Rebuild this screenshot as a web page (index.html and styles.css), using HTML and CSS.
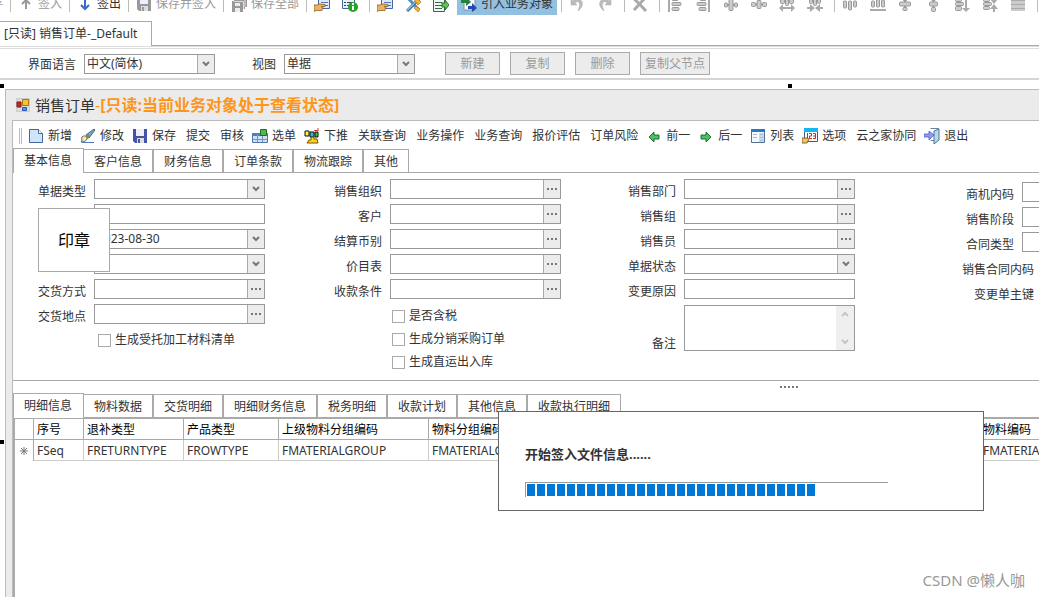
FILE: index.html
```html
<!DOCTYPE html>
<html lang="zh-CN">
<head>
<meta charset="utf-8">
<title>销售订单</title>
<link rel="stylesheet" href="styles.css">
</head>
<body>
<svg class="defs" aria-hidden="true">
  <symbol id="floppy" viewBox="0 0 16 16"><path d="M1 1h14v14H3l-2-2z" fill="currentColor"/><path d="M4 1h8v7H4z" fill="#eef"/><path d="M5 10h7v5H5z" fill="#ddd"/><path d="M6 11h2v4H6z" fill="currentColor"/></symbol>
  <symbol id="floppies" viewBox="0 0 16 16"><path d="M5 0h11v11h-2v2h-2v3H1V5h2V3h2z" fill="#999"/><path d="M3 5.500h9.500V13M5 3.500h9V11" stroke="#ddd" fill="none"/><path d="M4 7h5v3H4zM4 12h5v4H4z" fill="#eee"/></symbol>
  <symbol id="form-hand" viewBox="0 0 16 16"><path d="M4.500.500h11v12h-11z" fill="#dce8fb" stroke="#4568a0"/><path d="M1 1h3v3H1z" fill="#234"/><path d="M7 3.500h7M7 6.500h7M9 9.500h5" stroke="#5777a8"/><path d="M0 9h3l2-1 6 .5v2H7l2 1-1 3H2l-2 1z" fill="#e9b45c" stroke="#83531c" stroke-width=".7"/></symbol>
  <symbol id="form-info" viewBox="0 0 16 16"><path d="M.500.500h12v12H.500z" fill="#e8effa" stroke="#4568a0"/><path d="M2 3.500h2m1 0h6M2 6.500h2m1 0h6M2 9.500h2m1 0h3" stroke="#345"/><circle cx="11" cy="11" r="5" fill="#28a12c"/><path d="M11 7v2m0 1v4" stroke="#fff" stroke-width="2"/></symbol>
  <symbol id="tools" viewBox="0 0 16 16"><path d="M2 1l12 13" stroke="#4e93cb" stroke-width="3"/><path d="M14 3L2 15" stroke="#3b6b9a" stroke-width="3"/><path d="M13.500 3L2 14.500" stroke="#dff" stroke-width="1"/><path d="M8 1l4 1 4 4-3 3-3-4zM11 10l4 3-2 3-4-4z" fill="#f3b52f" stroke="#9c671b" stroke-width=".6"/></symbol>
  <symbol id="doc-go" viewBox="0 0 16 16"><path d="M.500.500h11v15H.500z" fill="#eff6ef" stroke="#346a4c"/><path d="M2 3.500h7M2 6.500h7M2 9.500h7M2 12.500h7" stroke="#356b4c"/><path d="M9 7h3V4l4 5-4 5v-3H9z" fill="#68bf58" stroke="#26742c"/></symbol>
  <symbol id="import" viewBox="0 0 16 16"><path d="M3 0h11v14H3z" fill="#f5f8fc" stroke="#7f95ad"/><path d="M0 4h5V1l5 5-5 4V7H0z" fill="#218238"/><path d="M7 10h4V7l5 5-5 4v-3H7z" fill="#2447b3"/></symbol>
  <symbol id="undo" viewBox="0 0 16 16"><path d="M2 3v6h6L6 7c3-3 6 0 4 5l-1 3c6-4 6-12-1-12-2 0-3 1-4 2z" fill="#bbb" stroke="#aaa" stroke-width=".5"/></symbol>
  <symbol id="cross" viewBox="0 0 16 16"><path d="M1 2c4 3 8 8 13 13M14 1C10 5 6 10 2 14" stroke="#aaa" stroke-width="3" fill="none"/></symbol>
  <symbol id="al-edge" viewBox="0 0 16 16"><path d="M2 0v16" stroke="#aaa" stroke-width="2"/><g fill="#ccc" stroke="#999"><rect x="5" y="1.500" width="6" height="3" rx="1"/><rect x="5" y="6.500" width="9" height="3" rx="1"/><rect x="5" y="11.500" width="7" height="3" rx="1"/></g></symbol>
  <symbol id="al-mid" viewBox="0 0 16 16"><g fill="#ccc" stroke="#999"><path d="M1 9h14" stroke-width="2"/><rect x="1.500" y="7" width="3" height="4" rx="1"/><rect x="6" y="3.500" width="4" height="11" rx="1"/><rect x="11.500" y="7" width="3" height="4" rx="1"/></g></symbol>
  <symbol id="al-space" viewBox="0 0 16 16"><g fill="#ccc" stroke="#999"><path d="M1 8.500h14" stroke-width="2"/><rect x=".500" y="6.500" width="4" height="4" rx="1"/><rect x="6" y="4.500" width="4" height="8" rx="1"/><rect x="11.500" y="6.500" width="4" height="4" rx="1"/></g></symbol>
  <symbol id="al-size" viewBox="0 0 16 16"><g fill="#ccc" stroke="#999"><rect x="1.500" y="1.500" width="4" height="6" rx="1"/><rect x="6.500" y="1.500" width="3" height="8" rx="1"/><rect x="10.500" y="1.500" width="4" height="6" rx="1"/></g><path d="M0 12l4-4v3h8V8l4 4-4 4v-3H4v3z" fill="#aaa"/></symbol>
  <symbol id="al-close" viewBox="0 0 16 16"><g fill="#ccc" stroke="#999"><rect x="2.500" y="1.500" width="3" height="6" rx="1"/><rect x="6.500" y="1.500" width="3" height="8" rx="1"/><rect x="10.500" y="1.500" width="3" height="6" rx="1"/></g><path d="M0 11h3V8l5 4-5 4v-3H0zM16 11h-3V8l-5 4 5 4v-3h3z" fill="#aaa"/></symbol>
  <symbol id="al-rows" viewBox="0 0 16 16"><path d="M1 0h14v15H1z" fill="#ccc"/><path d="M1 4.500h14M1 8.500h14M1 12.500h14" stroke="#aaa"/></symbol>
  <symbol id="arrow" viewBox="0 0 16 16"><path d="M3 9l5-5v3h5v4H8v3z" fill="#4fbf62" stroke="#177332" stroke-width="1"/></symbol>
</svg>

<div class="app-bar" role="toolbar">
  <button class="app-btn cut">存</button><i class="sep"></i>
  <button class="app-btn off"><svg class="ic" viewBox="0 0 16 16"><path d="M8 13V4M4 8l4-4 4 4" stroke="#999" stroke-width="2" fill="none"/></svg>签入</button><i class="sep"></i>
  <button class="app-btn"><svg class="ic" viewBox="0 0 16 16"><path d="M8 1v12M4 9l4 4 4-4" stroke="#3769d3" stroke-width="2" fill="none"/></svg>签出</button><i class="sep"></i>
  <button class="app-btn off"><svg class="ic"><use href="#floppy"/></svg>保存并签入</button><i class="sep"></i>
  <button class="app-btn off"><svg class="ic"><use href="#floppies"/></svg>保存全部</button><i class="sep"></i>
  <button class="tool" aria-label="表单"><svg class="ic"><use href="#form-hand"/></svg></button>
  <button class="tool" aria-label="信息"><svg class="ic"><use href="#form-info"/></svg></button><i class="sep"></i>
  <button class="tool" aria-label="属性"><svg class="ic"><use href="#form-hand"/></svg></button>
  <button class="tool" aria-label="工具"><svg class="ic"><use href="#tools"/></svg></button>
  <button class="tool" aria-label="导出"><svg class="ic"><use href="#doc-go"/></svg></button>
  <button class="app-btn on"><svg class="ic"><use href="#import"/></svg>引入业务对象</button><i class="sep"></i>
  <button class="tool" aria-label="撤销"><svg class="ic"><use href="#undo"/></svg></button>
  <button class="tool" aria-label="重做"><svg class="ic flip"><use href="#undo"/></svg></button><i class="sep"></i>
  <button class="tool" aria-label="删除对象"><svg class="ic"><use href="#cross"/></svg></button><i class="sep"></i>
  <button class="tool" aria-label="左对齐"><svg class="ic"><use href="#al-edge"/></svg></button>
  <button class="tool" aria-label="右对齐"><svg class="ic flip"><use href="#al-edge"/></svg></button>
  <button class="tool" aria-label="居中"><svg class="ic"><use href="#al-mid"/></svg></button>
  <button class="tool" aria-label="等间距"><svg class="ic"><use href="#al-space"/></svg></button>
  <button class="tool" aria-label="增加间距"><svg class="ic"><use href="#al-size"/></svg></button>
  <button class="tool" aria-label="减少间距"><svg class="ic"><use href="#al-close"/></svg></button><i class="sep"></i>
  <button class="tool" aria-label="顶对齐"><svg class="ic turn"><use href="#al-edge"/></svg></button>
  <button class="tool" aria-label="底对齐"><svg class="ic turn-back"><use href="#al-edge"/></svg></button>
  <button class="tool" aria-label="垂直居中"><svg class="ic turn"><use href="#al-mid"/></svg></button>
  <button class="tool" aria-label="垂直等间距"><svg class="ic turn"><use href="#al-space"/></svg></button>
  <button class="tool" aria-label="增加行距"><svg class="ic turn-back"><use href="#al-size"/></svg></button>
  <button class="tool" aria-label="减少行距"><svg class="ic turn-back"><use href="#al-close"/></svg></button>
  <button class="tool" aria-label="行"><svg class="ic"><use href="#al-rows"/></svg></button><i class="sep"></i>
</div>

<div class="doc-tabs"><button class="doc-tab">[只读] 销售订单-_Default</button></div>

<div class="filter-bar">
  <label for="lang">界面语言</label>
  <div class="field w-view"><select id="lang"><option>中文(简体)</option></select><span class="drop"><svg viewBox="0 0 8 6"><path d="M1 1l3 3 3-3" /></svg></span></div>
  <label for="view" class="view-label">视图</label>
  <div class="field w-view"><select id="view"><option>单据</option></select><span class="drop"><svg viewBox="0 0 8 6"><path d="M1 1l3 3 3-3" /></svg></span></div>
  <div class="actions"><button disabled>新建</button><button disabled>复制</button><button disabled>删除</button><button disabled class="wide">复制父节点</button></div>
</div>

<main class="canvas">
  <i class="handle h-nw"></i><i class="handle h-n"></i><i class="handle h-w"></i>
  <section class="window">
    <h1 class="title">
      <svg class="title-ic" viewBox="0 0 14 14"><path d="M.500.500h13v13H.500z" fill="#ddd" stroke="#ccc"/><path d="M1 4h4v5H1z" fill="#c82a22" stroke="#7a1512"/><path d="M6.500 1.500h6v6h-6z" fill="#f6c52d" stroke="#a87410"/><path d="M6.500 9.500h4v3h-4z" fill="#5b94ec" stroke="#2858ac"/></svg>
      <span>销售订单</span><span class="state">-<b>[只读:当前业务对象处于查看状态]</b></span>
    </h1>
    <div class="panel">
      <div class="tool-bar" role="toolbar">
        <i class="grip"></i>
        <button class="cmd"><svg class="ic" viewBox="0 0 16 16"><path d="M1.500 1.500h9l4 4v9h-13z" fill="#cfe5fa" stroke="#406795"/><path d="M10.500 1.500v4h4" fill="#fff" stroke="#406795"/></svg>新增</button>
        <button class="cmd"><svg class="ic" viewBox="0 0 16 16"><path d="M14 1l1 1-6 8-3-3z" fill="#7da7d4" stroke="#44608a"/><path d="M8 6l2 2-2 3-3-3z" fill="#5fa040"/><path d="M2 9c2-2 5-1 5 1 0 3-3 4-6 4 2-1 0-3 1-5z" fill="#f2e5bb" stroke="#6b6250"/><path d="M2 14.500h12" stroke="#4f79be" stroke-width="1"/></svg>修改</button>
        <button class="cmd"><svg class="ic blue"><use href="#floppy"/></svg>保存</button>
        <button class="cmd plain">提交</button>
        <button class="cmd plain">审核</button>
        <button class="cmd"><svg class="ic" viewBox="0 0 16 16"><path d="M.500 5.500h15v9H.500z" fill="#cfe0f6" stroke="#5275aa"/><path d="M0 5h9v3H0z" fill="#4e7dc1"/><path d="M.500 11.500h15M5.500 6v8M10.500 6v8" stroke="#7294c5"/><path d="M8.500 1.500h6v6h-6z" fill="#54b848" stroke="#236c24"/></svg>选单</button>
        <button class="cmd"><svg class="ic" viewBox="0 0 16 16"><path d="M1 3h4v5H1z" fill="#fff04a" stroke="#111"/><path d="M6 4h4v5H6z" fill="#26bfe8" stroke="#111"/><path d="M11 4h3v5h-3z" fill="#45c545" stroke="#111"/><path d="M10 2.500h4M14 0v3" stroke="#c43" /><path d="M7 9h3v2h3l1 4H3l2-3h2z" fill="#ffd21e" stroke="#735300"/></svg>下推</button>
        <button class="cmd plain">关联查询</button>
        <button class="cmd plain">业务操作</button>
        <button class="cmd plain">业务查询</button>
        <button class="cmd plain">报价评估</button>
        <button class="cmd plain">订单风险</button>
        <button class="cmd"><svg class="ic"><use href="#arrow"/></svg>前一</button>
        <button class="cmd"><svg class="ic flip"><use href="#arrow"/></svg>后一</button>
        <button class="cmd"><svg class="ic" viewBox="0 0 16 16"><path d="M1.500 1.500h13v13h-13z" fill="#f5f8fc" stroke="#526e95"/><path d="M1 1h14v3H1z" fill="#2478d0"/><path d="M9 5h5v9H9z" fill="#cbd9ec"/><path d="M3 6.500h4M3 9.500h4M10 6.500h3M10 9.500h3M10 12.500h3" stroke="#a9bcd4"/></svg>列表</button>
        <button class="cmd"><svg class="ic" viewBox="0 0 16 16"><path d="M2.500.500h13v13h-13z" fill="#fff" stroke="#425a82"/><path d="M2 0h14v4H2z" fill="#17b5ee"/><path d="M5.500 5v6M7 5.500h2.500V8H7.500v2.500H10M11 5.500h2.500v5H11M11 8h2" fill="none" stroke="#c22a30"/><path d="M0 10h5l2 1-2 4H0z" fill="#edc565" stroke="#8b642a"/></svg>选项</button>
        <button class="cmd plain">云之家协同</button>
        <button class="cmd"><svg class="ic" viewBox="0 0 16 16"><path d="M6.500.500h8v12h-8" fill="#fff" stroke="#6684a6"/><path d="M10 3l5-2v11l-5 4z" fill="#b9d8ee" stroke="#4e7394"/><path d="M0 6h5V3l5 4-5 5V9H0z" fill="#8f9df0" stroke="#4353b2" stroke-width=".7"/></svg>退出</button>
      </div>

      <nav class="tabs"><button class="tab current">基本信息</button><button class="tab">客户信息</button><button class="tab">财务信息</button><button class="tab">订单条款</button><button class="tab">物流跟踪</button><button class="tab">其他</button></nav>

      <form class="form">
        <div class="col col-1">
          <div class="row"><label for="a1">单据类型</label><div class="field"><select id="a1"><option></option></select><span class="drop"><svg viewBox="0 0 8 6"><path d="M1 1l3 3 3-3" /></svg></span></div></div>
          <div class="row"><label></label><div class="field"><input aria-label="单据编号"></div></div>
          <div class="row"><label></label><div class="field"><input aria-label="日期" value="2023-08-30"><button type="button" class="drop" aria-label="选择日期"><svg viewBox="0 0 8 6"><path d="M1 1l3 3 3-3" /></svg></button></div></div>
          <div class="row"><label></label><div class="field"><select aria-label="类型"><option></option></select><span class="drop"><svg viewBox="0 0 8 6"><path d="M1 1l3 3 3-3" /></svg></span></div></div>
          <div class="row"><label for="a5">交货方式</label><div class="field"><input id="a5"><button type="button" class="more" aria-label="选择"></button></div></div>
          <div class="row"><label for="a6">交货地点</label><div class="field"><input id="a6"><button type="button" class="more" aria-label="选择"></button></div></div>
          <label class="check"><input type="checkbox">生成受托加工材料清单</label>
          <div class="stamp">印章</div>
        </div>
        <div class="col col-2">
          <div class="row"><label for="b1">销售组织</label><div class="field"><input id="b1"><button type="button" class="more" aria-label="选择"></button></div></div>
          <div class="row"><label for="b2">客户</label><div class="field"><input id="b2"><button type="button" class="more" aria-label="选择"></button></div></div>
          <div class="row"><label for="b3">结算币别</label><div class="field"><input id="b3"><button type="button" class="more" aria-label="选择"></button></div></div>
          <div class="row"><label for="b4">价目表</label><div class="field"><input id="b4"><button type="button" class="more" aria-label="选择"></button></div></div>
          <div class="row"><label for="b5">收款条件</label><div class="field"><input id="b5"><button type="button" class="more" aria-label="选择"></button></div></div>
          <div class="checks">
            <label class="check"><input type="checkbox">是否含税</label>
            <label class="check"><input type="checkbox">生成分销采购订单</label>
            <label class="check"><input type="checkbox">生成直运出入库</label>
          </div>
        </div>
        <div class="col col-3">
          <div class="row"><label for="c1">销售部门</label><div class="field"><input id="c1"><button type="button" class="more" aria-label="选择"></button></div></div>
          <div class="row"><label for="c2">销售组</label><div class="field"><input id="c2"><button type="button" class="more" aria-label="选择"></button></div></div>
          <div class="row"><label for="c3">销售员</label><div class="field"><input id="c3"><button type="button" class="more" aria-label="选择"></button></div></div>
          <div class="row"><label for="c4">单据状态</label><div class="field"><select id="c4"><option></option></select><span class="drop"><svg viewBox="0 0 8 6"><path d="M1 1l3 3 3-3" /></svg></span></div></div>
          <div class="row"><label for="c5">变更原因</label><div class="field"><input id="c5"></div></div>
          <div class="row note"><label for="c6">备注</label><div class="field"><textarea id="c6"></textarea><span class="scroll"><svg viewBox="0 0 8 6"><path d="M1 5l3-3 3 3" /></svg><svg viewBox="0 0 8 6"><path d="M1 1l3 3 3-3" /></svg></span></div></div>
        </div>
        <div class="col col-4">
          <div class="row"><label for="d1">商机内码</label><div class="field"><input id="d1"></div></div>
          <div class="row"><label for="d2">销售阶段</label><div class="field"><input id="d2"></div></div>
          <div class="row"><label for="d3">合同类型</label><div class="field"><input id="d3"></div></div>
          <div class="row far"><label for="d4">销售合同内码</label><div class="field"><input id="d4"></div></div>
          <div class="row far"><label for="d5">变更单主键</label><div class="field"><input id="d5"></div></div>
        </div>
      </form>

      <div class="splitter"><i></i><i></i><i></i><i></i><i></i></div>

      <nav class="tabs lower"><button class="tab current">明细信息</button><button class="tab">物料数据</button><button class="tab">交货明细</button><button class="tab">明细财务信息</button><button class="tab">税务明细</button><button class="tab">收款计划</button><button class="tab">其他信息</button><button class="tab">收款执行明细</button></nav>
      <div class="grid-area">
        <table class="grid">
          <colgroup><col class="g-mark"><col class="g-seq"><col class="g-return"><col class="g-row"><col class="g-parent"><col class="g-group"><col></colgroup>
          <thead><tr><th></th><th>序号</th><th>退补类型</th><th>产品类型</th><th>上级物料分组编码</th><th>物料分组编码</th><th>物料编码</th></tr></thead>
          <tbody><tr><td class="mark"><svg viewBox="0 0 8 8"><path d="M4 0v8M0 4h8M1 1l6 6M7 1L1 7"/></svg></td><td>FSeq</td><td>FRETURNTYPE</td><td>FROWTYPE</td><td>FMATERIALGROUP</td><td>FMATERIALGROUP</td><td>FMATERIALID</td></tr></tbody>
        </table>
      </div>
    </div>
  </section>
</main>

<div class="dialog" role="dialog" aria-labelledby="msg">
  <label id="msg" for="prog">开始签入文件信息......</label>
  <progress id="prog" value="80" max="100"></progress>
</div>
<div class="credit">CSDN @懒人咖</div>
</body>
</html>
```

FILE: styles.css
```css
* { box-sizing: border-box; }
html, body { margin: 0; height: 100%; }
body {
  display: flex;
  flex-direction: column;
  min-height: 100vh;
  overflow: hidden;
  position: relative;
  background: #fff;
  color: #333;
  font: 12px/16px "Noto Sans", "Noto Sans CJK SC", sans-serif;
}
button, input, select, textarea {
  font: inherit;
  color: inherit;
  margin: 0;
  padding: 0;
  border: 0;
  border-radius: 0;
  background: none;
  outline: 0;
}
button { white-space: nowrap; }
i { display: block; }
.defs { position: absolute; width: 0; height: 0; }
.ic { width: 16px; height: 16px; flex: none; display: block; }
.flip { transform: scaleX(-1); }
.turn { transform: rotate(90deg); }
.turn-back { transform: rotate(-90deg); }
.blue { color: #4354a8; }

/* application toolbar */
.app-bar { display: flex; align-items: flex-end; height: 15px; flex: none; overflow: hidden; }
.app-btn { display: flex; align-items: center; gap: 4px; height: 23px; padding: 0 2px 0 6px; flex: none; }
.app-btn.off { color: #999; }
.app-btn.cut { width: 5px; padding: 0 2px 0 0; justify-content: flex-end; color: #999; overflow: hidden; }
.app-btn.on { margin-left: 2px; padding: 0 4px; background: #92c0e0; }
.tool { display: flex; align-items: center; justify-content: center; width: 28px; height: 23px; flex: none; }
.sep { width: 1px; height: 20px; margin: 0 1px 3px 5px; background: #bbb; flex: none; }
.app-btn.on + .sep { margin-left: 4px; }

/* document tabs */
.doc-tabs { display: flex; align-items: flex-end; height: 31px; flex: none; border-bottom: 1px solid #aaa; }
.doc-tab { height: 25px; margin-bottom: -1px; padding: 0 14px 0 4px; border: solid #aaa; border-width: 1px 1px 0 0; background: #fff; }

.filter-bar {
  display: flex;
  align-items: center;
  gap: 8px;
  height: 34px;
  flex: none;
  padding: 0 28px;
  border-top: 3px double #ddd;
  border-bottom: 2px solid #d5d5d5;
}
.filter-bar .w-view { width: 131px; }
.filter-bar label { padding-top: 2px; }
.view-label { margin-left: 29px; }
.actions { display: flex; gap: 10px; margin-left: 22px; }
.actions button { width: 55px; height: 23px; border: 1px solid #aaa; background: #ececec; color: #999; }
.actions .wide { width: 70px; }

/* fields */
.field { display: flex; position: relative; width: 171px; height: 20px; flex: none; border: 1px solid #999; background: #fff; }
.field input, .field select, .field textarea { flex: 1; min-width: 0; padding: 0 2px; appearance: none; resize: none; }
.drop, .more { display: flex; align-items: center; justify-content: center; width: 17px; flex: none; border-left: 1px solid #aaa; background: #ececec; }
.drop svg { width: 8px; height: 6px; }
.drop path { fill: none; stroke: #777; stroke-width: 2; }
.more::before {
  content: "";
  width: 10px;
  height: 2px;
  background: repeating-linear-gradient(90deg, #777 0 2px, transparent 2px 4px);
}

/* designer surface */
.canvas { position: relative; display: flex; flex: 1; min-height: 0; padding: 9px 0 0 5px; }
.handle { position: absolute; width: 4px; height: 4px; background: #000; }
.h-nw { left: 0; top: 4px; }
.h-n { left: 788px; top: 4px; }
.h-w { left: 0; top: 360px; }
.window { display: flex; flex-direction: column; flex: 1; min-width: 0; border: solid #bbb; border-width: 1px 0 0 1px; background: #ebebeb; padding-left: 6px; }
.title { display: flex; align-items: center; height: 30px; flex: none; margin: 0; padding-left: 4px; font-size: 15px; font-weight: 400; line-height: 24px; }
.title-ic { width: 14px; height: 14px; margin-right: 5px; }
.state { color: #ff9519; font-size: 16px; }
.panel { display: flex; flex-direction: column; flex: 1; min-width: 0; min-height: 0; border: solid #bbb; border-width: 1px 0 0 1px; background: #fff; }

.tool-bar { display: flex; align-items: center; gap: 8px; height: 27px; flex: none; padding: 2px 0 0 6px; }
.grip { width: 3px; height: 16px; margin-right: -2px; border: solid #bbb; border-width: 0 1px; }
.cmd { display: flex; align-items: center; gap: 4px; flex: none; }
.cmd.plain { padding-left: 2px; }

.tabs { display: flex; align-items: flex-end; height: 25px; flex: none; border-bottom: 1px solid #aaa; }
.tab { height: 23px; padding: 2px 10px 0; margin-left: -1px; border: solid #aaa; border-width: 1px 2px 0 1px; background: #fff; }
.tab:last-child { border-right-width: 1px; }
.tab.current { height: 25px; margin: 0 0 -1px; border-right-width: 1px; padding: 0 11px 0 10px; }

/* form */
.form { display: flex; flex: none; padding-top: 6px; min-height: 208px; overflow: hidden; border-bottom: 1px solid #aaa; }
.col { position: relative; display: flex; flex-direction: column; gap: 5px; flex: none; }
.row { display: flex; gap: 8px; }
.row > label { padding-top: 5px; text-align: right; height: 20px; }
.col-1 .row > label { width: 73px; }
.col-2 .row > label { width: 117px; }
.col-3 .row > label { width: 115px; }
.col-4 { padding-top: 3px; }
.col-4 .row > label { width: 159px; }
.col-4 .far > label { width: 179px; }
.note .field { height: 46px; }
.row.note { margin-top: 1px; }
.note > label { height: auto; padding-top: 31px; }
.scroll { display: flex; flex-direction: column; justify-content: space-between; align-items: center; width: 18px; padding: 5px 0; background: #efefef; }
.scroll svg { width: 8px; height: 6px; }
.scroll path { fill: none; stroke: #c5c5c5; stroke-width: 2; }
.check { display: flex; align-items: center; gap: 4px; height: 18px; }
.check input { appearance: none; width: 13px; height: 13px; border: 1px solid #aaa; background: #fff; }
.col-1 > .check { margin: 2px 0 0 85px; }
.checks { display: flex; flex-direction: column; gap: 5px; margin: 3px 0 0 127px; }
.stamp {
  position: absolute;
  left: 25px;
  top: 29px;
  display: flex;
  align-items: center;
  justify-content: center;
  width: 72px;
  height: 64px;
  border: 1px solid #aaa;
  background: #fff;
  color: #000;
  font-size: 16px;
}

.splitter { display: flex; justify-content: center; gap: 2px; height: 12px; flex: none; padding: 5px 0 0 526px; }
.splitter i { width: 2px; height: 2px; background: #777; }
.lower { border-bottom-width: 2px; height: 26px; }

.grid-area { flex: 1; min-height: 0; overflow: hidden; border-left: 2px solid #aaa; }
.grid { width: 100%; table-layout: fixed; border-collapse: separate; border-spacing: 0; }
.g-mark { width: 19px; }
.g-seq { width: 50px; }
.g-return { width: 100px; }
.g-row { width: 95px; }
.g-parent { width: 150px; }
.g-group { width: 551px; }
.grid th, .grid td { height: 21px; padding: 1px 3px 0; border: solid #ccc; border-width: 0 1px 1px 0; text-align: left; font-weight: 400; white-space: nowrap; overflow: hidden; }
.grid th { border-color: #aaa; color: #000; }
.grid th:last-child, .grid td:last-child { border-right-width: 0; }
.grid .mark { border-bottom-width: 0; border-right-color: #aaa; text-align: center; }
.mark svg { width: 8px; height: 8px; }
.mark path { stroke: #777; stroke-width: 1; }

/* progress dialog */
.dialog { position: absolute; left: 498px; top: 411px; width: 486px; padding: 34px 26px 13px; border: 1px solid #666; background: #fff; }
.dialog label { display: block; font-size: 13px; font-weight: 700; }
.dialog progress { display: block; appearance: none; width: 363px; height: 15px; margin-top: 20px; padding: 1px; border: solid #999; border-width: 1px 0 0 1px; background: #fff; }
.dialog progress::-webkit-progress-bar { background: #fff; }
.dialog progress::-webkit-progress-value { background: repeating-linear-gradient(90deg, #0078d7 0 8px, #fff 8px 10px); }

.credit { position: absolute; right: 14px; bottom: 7px; color: #999; font-size: 15px; line-height: 20px; }
```
